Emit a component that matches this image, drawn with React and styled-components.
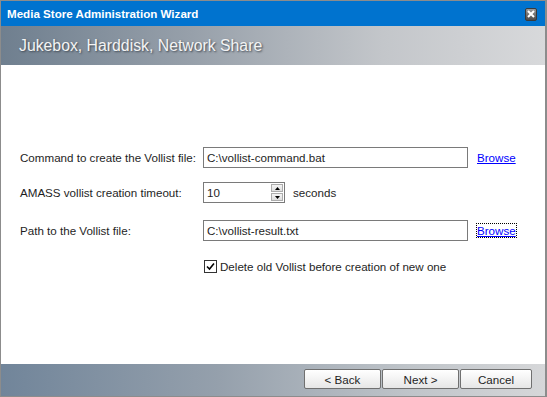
import React, { useState } from 'react';
import styled, { createGlobalStyle } from 'styled-components';

const GlobalStyle = createGlobalStyle`
  html, body {
    margin: 0;
    padding: 0;
    background: #ffffff;
  }
  * {
    box-sizing: border-box;
  }
`;

const Window = styled.div`
  width: 547px;
  height: 397px;
  display: flex;
  flex-direction: column;
  border: 1px solid #8c8c8c;
  border-right-width: 2px;
  background: #ffffff;
  font-family: "Liberation Sans", Arial, sans-serif;
  font-size: 11.6px;
  color: #1e1e1e;
`;

const TitleBar = styled.div`
  height: 25px;
  display: flex;
  align-items: center;
  justify-content: space-between;
  padding: 0 8px 0 6px;
  background: #0073cf;
  color: #ffffff;
  font-family: "Liberation Sans", Arial, sans-serif;
  font-weight: bold;
  font-size: 11.6px;
`;

const CloseButton = styled.div`
  width: 12px;
  height: 13px;
  display: flex;
  align-items: center;
  justify-content: center;
  border-radius: 2px;
  border: 1px solid #3a3a3a;
  background: linear-gradient(#9a9a9a, #4a4a4a);
  margin-top: 1px;
`;

const Banner = styled.div`
  height: 39px;
  display: flex;
  align-items: center;
  padding-left: 18px;
  background: linear-gradient(90deg, #6f7f8f 0%, #97a0aa 35%, #c3c6ca 70%, #d8d9db 100%);
`;

const BannerText = styled.div`
  font-family: "Liberation Sans", Arial, sans-serif;
  font-size: 15.8px;
  color: #f4f4f4;
  text-shadow: 1px 1px 2px #3e4650;
  margin-top: 1px;
`;

const Content = styled.div`
  flex: 1;
  padding: 82px 0 0 19px;
`;

const Row = styled.div`
  display: flex;
  align-items: center;
  height: 21px;
  margin-top: ${({ $gap }) => $gap || 0}px;
`;

const Label = styled.div`
  width: 183px;
  flex: none;
`;

const TextInput = styled.div`
  width: ${({ $width }) => $width}px;
  height: 21px;
  display: flex;
  align-items: center;
  padding-left: 3px;
  border: 1px solid #7a7a7a;
  background: #ffffff;
`;

const BrowseLink = styled.span`
  margin-left: 9px;
  color: #0000ff;
  text-decoration: underline;
  outline: ${({ $focused }) => ($focused ? '1px dotted #000' : 'none')};
  outline-offset: 0px;
  line-height: 13px;
`;

const Spinner = styled.div`
  width: 82px;
  height: 21px;
  display: flex;
  border: 1px solid #7a7a7a;
`;

const SpinValue = styled.div`
  flex: 1;
  display: flex;
  align-items: center;
  padding-left: 3px;
`;

const SpinButtons = styled.div`
  width: 14px;
  display: flex;
  flex-direction: column;
  gap: 1px;
  padding: 1px;
`;

const SpinButton = styled.div`
  flex: 1;
  display: flex;
  align-items: center;
  justify-content: center;
  border: 1px solid #acacac;
  background: linear-gradient(#f4f4f4, #dedede);
`;

const Unit = styled.span`
  margin-left: 8px;
`;

const CheckRow = styled.label`
  display: flex;
  align-items: center;
  margin-left: 184px;
  gap: 2px;
`;

const CheckBox = styled.span`
  width: 13px;
  height: 13px;
  display: flex;
  align-items: center;
  justify-content: center;
  border: 1px solid #333333;
  background: #ffffff;
  margin-right: 1px;
`;

const Footer = styled.div`
  height: 32px;
  display: flex;
  justify-content: flex-end;
  align-items: flex-start;
  gap: 1px;
  padding: 5px 13px 0 0;
  background: linear-gradient(90deg, #71859a 0%, #95a0ac 40%, #bfc4c9 75%, #d6d7d9 100%);
`;

const Button = styled.button`
  width: ${({ $width }) => $width}px;
  height: 20px;
  border: 1px solid #707070;
  border-radius: 2px;
  background: linear-gradient(#ffffff 0%, #f3f3f3 50%, #e6e6e6 100%);
  font-family: "Liberation Sans", Arial, sans-serif;
  font-size: 11.6px;
  color: #1e1e1e;
  padding: 0;
`;

function App() {
  const [deleteOld, setDeleteOld] = useState(true);

  return (
    <>
      <GlobalStyle />
      <Window>
        <TitleBar>
          <span>Media Store Administration Wizard</span>
          <CloseButton>
            <svg width="8" height="8" viewBox="0 0 8 8">
              <path d="M1 1 L7 7 M7 1 L1 7" stroke="#ffffff" strokeWidth="2" />
            </svg>
          </CloseButton>
        </TitleBar>
        <Banner>
          <BannerText>Jukebox, Harddisk, Network Share</BannerText>
        </Banner>
        <Content>
          <Row>
            <Label>Command to create the Vollist file:</Label>
            <TextInput $width={265}>C:\vollist-command.bat</TextInput>
            <BrowseLink>Browse</BrowseLink>
          </Row>
          <Row $gap={14}>
            <Label>AMASS vollist creation timeout:</Label>
            <Spinner>
              <SpinValue>10</SpinValue>
              <SpinButtons>
                <SpinButton>
                  <svg width="5" height="3" viewBox="0 0 5 3"><path d="M0 3 L2.5 0 L5 3 Z" fill="#000" /></svg>
                </SpinButton>
                <SpinButton>
                  <svg width="5" height="3" viewBox="0 0 5 3"><path d="M0 0 L2.5 3 L5 0 Z" fill="#000" /></svg>
                </SpinButton>
              </SpinButtons>
            </Spinner>
            <Unit>seconds</Unit>
          </Row>
          <Row $gap={17}>
            <Label>Path to the Vollist file:</Label>
            <TextInput $width={265}>C:\vollist-result.txt</TextInput>
            <BrowseLink $focused>Browse</BrowseLink>
          </Row>
          <Row $gap={15}>
            <CheckRow onClick={() => setDeleteOld(!deleteOld)}>
              <CheckBox>
                {deleteOld && (
                  <svg width="9" height="9" viewBox="0 0 9 9">
                    <path d="M1 4.5 L3.5 7 L8 1.5" stroke="#000" strokeWidth="1.6" fill="none" />
                  </svg>
                )}
              </CheckBox>
              Delete old Vollist before creation of new one
            </CheckRow>
          </Row>
        </Content>
        <Footer>
          <Button $width={77}>&lt; Back</Button>
          <Button $width={77}>Next &gt;</Button>
          <Button $width={72}>Cancel</Button>
        </Footer>
      </Window>
    </>
  );
}

export default App;
